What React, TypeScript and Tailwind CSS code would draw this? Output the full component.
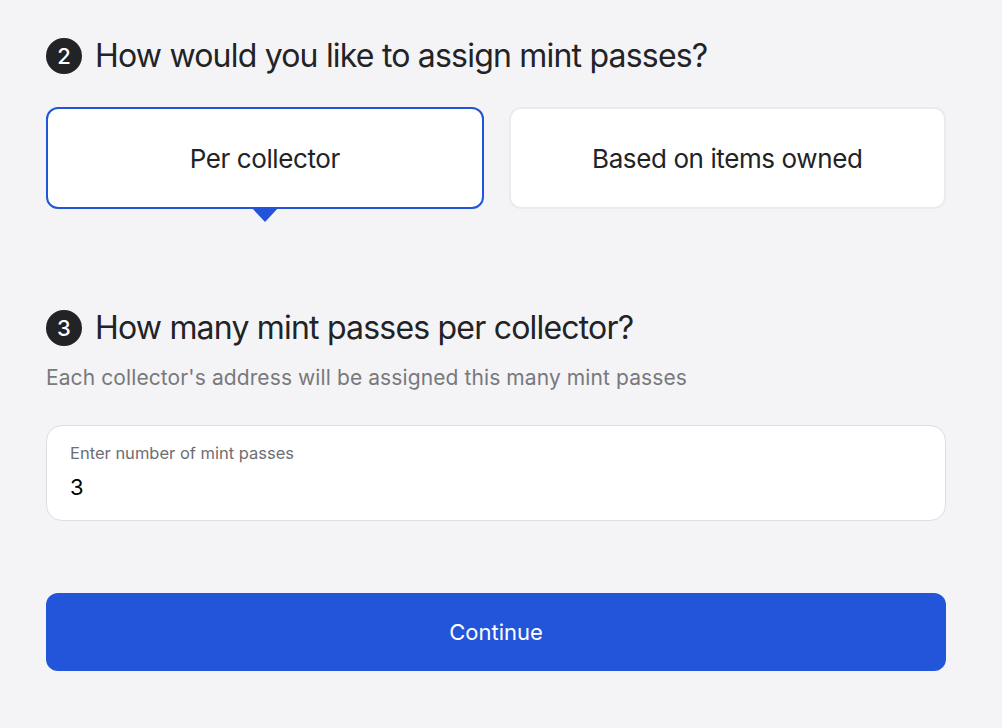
import React from "react";

const font = { fontFamily: "Inter, 'Noto Sans', sans-serif" };

function StepTitle({ n, children }: { n: number; children: React.ReactNode }) {
  return (
    <div className="flex items-center gap-[13px]">
      <div className="w-[36px] h-[36px] rounded-full bg-[#222326] text-white flex items-center justify-center text-[22px] font-medium leading-none">
        {n}
      </div>
      <h2 className="text-[32px] leading-[40px] font-normal text-[#222326] tracking-[-0.8px]">{children}</h2>
    </div>
  );
}

export default function App() {
  return (
    <div className="min-h-screen w-full bg-[#f4f4f6]" style={font}>
      <div className="w-[900px] ml-[46px] pt-[36px]">
        <StepTitle n={2}>How would you like to assign mint passes?</StepTitle>

        <div className="mt-[31px] grid grid-cols-2 gap-[25px]">
          <div className="relative">
            <button className="w-full h-[102px] rounded-[12px] bg-white border-2 border-[#2254da] text-[26px] text-[#222326] tracking-[-0.4px]">
              Per collector
            </button>
            <div className="absolute left-1/2 -translate-x-1/2 top-[100px] w-0 h-0 border-l-[14px] border-r-[14px] border-t-[15px] border-l-transparent border-r-transparent border-t-[#2254da]" />
          </div>
          <button className="w-full h-[102px] rounded-[12px] bg-white border-2 border-[#ebebee] text-[26px] text-[#222326] tracking-[-0.4px]">
            Based on items owned
          </button>
        </div>

        <div className="mt-[99px]">
          <StepTitle n={3}>How many mint passes per collector?</StepTitle>
        </div>
        <p className="mt-[16px] text-[21px] leading-[28px] text-[#78787d] tracking-[0.1px]">
          Each collector's address will be assigned this many mint passes
        </p>

        <div className="mt-[33px] h-[96px] rounded-[16px] bg-white border border-[#dedee2] px-[23px] pt-[17px]">
          <div className="text-[16.5px] leading-[20px] text-[#6e6e73]">Enter number of mint passes</div>
          <div className="mt-[10px] text-[22px] leading-[28px] text-black">3</div>
        </div>

        <button className="mt-[72px] w-full h-[78px] rounded-[12px] bg-[#2255d9] text-white text-[22px]">
          Continue
        </button>
      </div>
    </div>
  );
}
